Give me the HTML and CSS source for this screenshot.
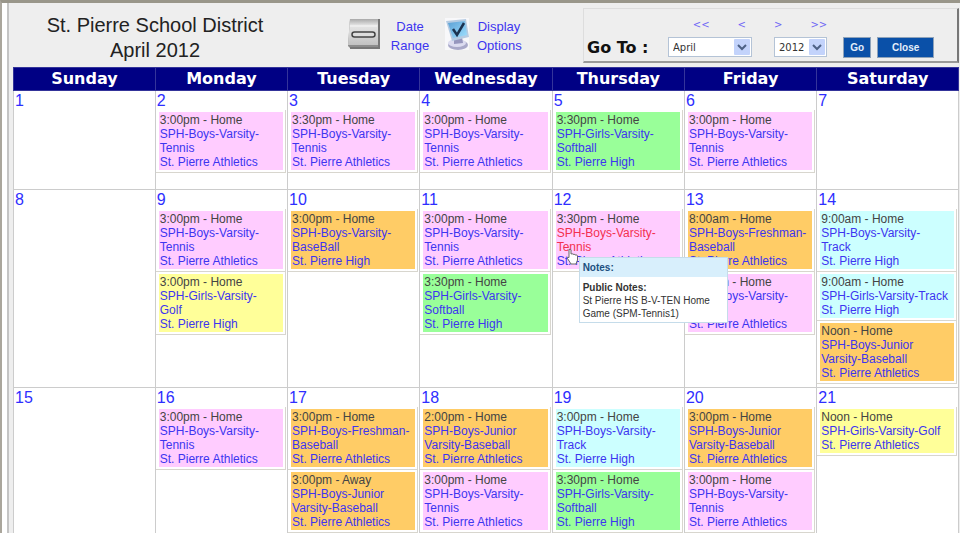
FILE: index.html
```html
<!DOCTYPE html>
<html lang="en">
<head>
    <meta charset="UTF-8">
    <meta name="viewport" content="width=device-width, initial-scale=1.0">
    <title>St. Pierre School District Calendar</title>
    <link rel="stylesheet" href="styles.css">
</head>
<body>
<div class="page">
    <header class="header">
        <h1 class="title">St. Pierre School District<br>April 2012</h1>
        <nav class="tools">
            <a href="#" class="tool">
                <svg class="icon" width="34" height="34" viewBox="0 0 34 34">
                    <defs>
                        <linearGradient id="metal" x1="0" y1="0" x2="0" y2="1">
                            <stop offset="0" stop-color="#a8a8a8"/>
                            <stop offset=".25" stop-color="#e6e6e6"/>
                            <stop offset="1" stop-color="#c2c2c2"/>
                        </linearGradient>
                    </defs>
                    <path d="M3 2h30v30H4l-3-3z" fill="#8d8d8d"/>
                    <path d="M3 2h28v26H1z" fill="url(#metal)"/>
                    <path d="M3 9h27" stroke="#f5f5f5"/>
                    <path d="M32 2v29H3" fill="none" stroke="#777" stroke-width="2"/>
                    <rect x="5" y="15" width="23" height="5" rx="2.5" fill="#ddd" stroke="#444" stroke-width="1.5"/>
                </svg>
                <span class="tool-text">Date<br>Range</span>
            </a>
            <a href="#" class="tool">
                <svg class="icon" width="26" height="34" viewBox="0 0 26 34">
                    <defs>
                        <linearGradient id="screen" x1="0" y1="0" x2="1" y2="1">
                            <stop offset="0" stop-color="#5a9fd4"/>
                            <stop offset="1" stop-color="#9fe0ff"/>
                        </linearGradient>
                    </defs>
                    <path d="M1 1h24v32H1z" fill="#f8f8fa"/>
                    <ellipse cx="14" cy="28" rx="10" ry="5" fill="#a9a9c9"/>
                    <ellipse cx="13" cy="26" rx="9" ry="4" fill="#dcdcf0"/>
                    <path d="M10 20l8 0 1 6-9 1z" fill="#9696bd"/>
                    <path d="M2 4l20-2 3 18-17 4z" fill="#b5cbe2"/>
                    <path d="M4 6l17-2 2 14-14 3z" fill="url(#screen)"/>
                    <path d="M9 12l4 6 7-12" fill="none" stroke="#1c3350" stroke-width="2.5"/>
                </svg>
                <span class="tool-text">Display<br>Options</span>
            </a>
        </nav>
        <form class="goto">
            <label class="goto-label" for="month">Go To :</label>
            <div class="picker">
                <div class="arrows arrows-back"><a href="#">&lt;&lt;</a><a href="#">&lt;</a></div>
                <div class="select-box month-box">
                    <select id="month"><option>April</option></select>
                    <svg class="drop" width="16" height="16" viewBox="0 0 16 16"><rect width="16" height="16" rx="1" fill="#c3d3fb"/><path d="M4 6l4 4 4-4" fill="none" stroke="#4d6185" stroke-width="2"/></svg>
                </div>
            </div>
            <div class="picker">
                <div class="arrows"><a href="#">&gt;</a><a href="#">&gt;&gt;</a></div>
                <div class="select-box year-box">
                    <select aria-label="Year"><option>2012</option></select>
                    <svg class="drop" width="16" height="16" viewBox="0 0 16 16"><rect width="16" height="16" rx="1" fill="#c3d3fb"/><path d="M4 6l4 4 4-4" fill="none" stroke="#4d6185" stroke-width="2"/></svg>
                </div>
            </div>
            <div class="buttons">
                <button type="button" class="btn">Go</button>
                <button type="button" class="btn btn-close">Close</button>
            </div>
        </form>
    </header>

    <table class="calendar">
        <colgroup>
            <col class="col-sun"><col class="col-day"><col class="col-day"><col class="col-day"><col class="col-day"><col class="col-day"><col class="col-sat">
        </colgroup>
        <thead>
            <tr><th>Sunday</th><th>Monday</th><th>Tuesday</th><th>Wednesday</th><th>Thursday</th><th>Friday</th><th>Saturday</th></tr>
        </thead>
        <tbody>
            <tr class="week-one">
                <td><a href="#" class="day">1</a></td>
                <td><a href="#" class="day">2</a>
                    <div class="event"><div class="box pink">3:00pm - Home<br><a href="#">SPH-Boys-Varsity-<br>Tennis<br>St. Pierre Athletics</a></div></div>
                </td>
                <td><a href="#" class="day">3</a>
                    <div class="event"><div class="box pink">3:30pm - Home<br><a href="#">SPH-Boys-Varsity-<br>Tennis<br>St. Pierre Athletics</a></div></div>
                </td>
                <td><a href="#" class="day">4</a>
                    <div class="event"><div class="box pink">3:00pm - Home<br><a href="#">SPH-Boys-Varsity-<br>Tennis<br>St. Pierre Athletics</a></div></div>
                </td>
                <td><a href="#" class="day">5</a>
                    <div class="event"><div class="box green">3:30pm - Home<br><a href="#">SPH-Girls-Varsity-<br>Softball<br>St. Pierre High</a></div></div>
                </td>
                <td><a href="#" class="day">6</a>
                    <div class="event"><div class="box pink">3:00pm - Home<br><a href="#">SPH-Boys-Varsity-<br>Tennis<br>St. Pierre Athletics</a></div></div>
                </td>
                <td><a href="#" class="day">7</a></td>
            </tr>
            <tr class="week-two">
                <td><a href="#" class="day">8</a></td>
                <td><a href="#" class="day">9</a>
                    <div class="event"><div class="box pink">3:00pm - Home<br><a href="#">SPH-Boys-Varsity-<br>Tennis<br>St. Pierre Athletics</a></div></div>
                    <div class="event"><div class="box yellow">3:00pm - Home<br><a href="#">SPH-Girls-Varsity-<br>Golf<br>St. Pierre High</a></div></div>
                </td>
                <td><a href="#" class="day">10</a>
                    <div class="event"><div class="box orange">3:00pm - Home<br><a href="#">SPH-Boys-Varsity-<br>BaseBall<br>St. Pierre High</a></div></div>
                </td>
                <td><a href="#" class="day">11</a>
                    <div class="event"><div class="box pink">3:00pm - Home<br><a href="#">SPH-Boys-Varsity-<br>Tennis<br>St. Pierre Athletics</a></div></div>
                    <div class="event"><div class="box green">3:30pm - Home<br><a href="#">SPH-Girls-Varsity-<br>Softball<br>St. Pierre High</a></div></div>
                </td>
                <td><a href="#" class="day">12</a>
                    <div class="event"><div class="box pink">3:30pm - Home<br><a href="#" class="active">SPH-Boys-Varsity-<br>Tennis</a><br><a href="#">St. Pierre Athletics</a></div>
                        <div class="notes">
                            <div class="notes-title">Notes:</div>
                            <div class="notes-body"><b>Public Notes:</b><br>St Pierre HS B-V-TEN Home<br>Game (SPM-Tennis1)</div>
                        </div>
                        <svg class="pointer" width="14" height="17" viewBox="0 0 14 17"><path d="M3 1.5q1.5-1 2 .5V6q1.500-.8 2 .4 1.500-.8 2 .6 2-.8 2.500 1v4l-1.500 4H5L1.500 10.500q-.6-2 1.500-1z" fill="#fff" stroke="#666" stroke-width="1"/></svg>
                    </div>
                </td>
                <td><a href="#" class="day">13</a>
                    <div class="event"><div class="box orange">8:00am - Home<br><a href="#">SPH-Boys-Freshman-<br>Baseball<br>St. Pierre Athletics</a></div></div>
                    <div class="event"><div class="box pink">3:00pm - Home<br><a href="#">SPH-Boys-Varsity-<br>Tennis<br>St. Pierre Athletics</a></div></div>
                </td>
                <td><a href="#" class="day">14</a>
                    <div class="event"><div class="box cyan">9:00am - Home<br><a href="#">SPH-Boys-Varsity-<br>Track<br>St. Pierre High</a></div></div>
                    <div class="event"><div class="box cyan">9:00am - Home<br><a href="#">SPH-Girls-Varsity-Track<br>St. Pierre High</a></div></div>
                    <div class="event"><div class="box orange">Noon - Home<br><a href="#">SPH-Boys-Junior<br>Varsity-Baseball<br>St. Pierre Athletics</a></div></div>
                </td>
            </tr>
            <tr>
                <td><a href="#" class="day">15</a></td>
                <td><a href="#" class="day">16</a>
                    <div class="event"><div class="box pink">3:00pm - Home<br><a href="#">SPH-Boys-Varsity-<br>Tennis<br>St. Pierre Athletics</a></div></div>
                </td>
                <td><a href="#" class="day">17</a>
                    <div class="event"><div class="box orange">3:00pm - Home<br><a href="#">SPH-Boys-Freshman-<br>Baseball<br>St. Pierre Athletics</a></div></div>
                    <div class="event"><div class="box orange">3:00pm - Away<br><a href="#">SPH-Boys-Junior<br>Varsity-Baseball<br>St. Pierre Athletics</a></div></div>
                </td>
                <td><a href="#" class="day">18</a>
                    <div class="event"><div class="box orange">2:00pm - Home<br><a href="#">SPH-Boys-Junior<br>Varsity-Baseball<br>St. Pierre Athletics</a></div></div>
                    <div class="event"><div class="box pink">3:00pm - Home<br><a href="#">SPH-Boys-Varsity-<br>Tennis<br>St. Pierre Athletics</a></div></div>
                </td>
                <td><a href="#" class="day">19</a>
                    <div class="event"><div class="box cyan">3:00pm - Home<br><a href="#">SPH-Boys-Varsity-<br>Track<br>St. Pierre High</a></div></div>
                    <div class="event"><div class="box green">3:30pm - Home<br><a href="#">SPH-Girls-Varsity-<br>Softball<br>St. Pierre High</a></div></div>
                </td>
                <td><a href="#" class="day">20</a>
                    <div class="event"><div class="box orange">3:00pm - Home<br><a href="#">SPH-Boys-Junior<br>Varsity-Baseball<br>St. Pierre Athletics</a></div></div>
                    <div class="event"><div class="box pink">3:00pm - Home<br><a href="#">SPH-Boys-Varsity-<br>Tennis<br>St. Pierre Athletics</a></div></div>
                </td>
                <td><a href="#" class="day">21</a>
                    <div class="event"><div class="box yellow">Noon - Home<br><a href="#">SPH-Girls-Varsity-Golf<br>St. Pierre Athletics</a></div></div>
                </td>
            </tr>
        </tbody>
    </table>
</div>
</body>
</html>
```
FILE: styles.css
```css
* {
    box-sizing: border-box;
}
body {
    margin: 0;
    height: 100vh;
    overflow: hidden;
    font-family: "Liberation Sans", Arial, sans-serif;
    background-color: #fff;
    border-top: 3px solid #99968a;
    border-left: 2px solid #aaa69c;
}
a {
    color: #3d35f0;
    text-decoration: none;
}
.page {
    margin-left: 5px;
    min-height: 100vh;
    padding: 1px 1px 0 4px;
    border-left: 2px solid #c4c4c4;
    background-color: #eee;
}

/* Top bar */
.header {
    display: flex;
    height: 63px;
    padding-top: 4px;
}
.title {
    width: 284px;
    margin: 0;
    padding-top: 5px;
    font-size: 20px;
    line-height: 25px;
    font-weight: normal;
    text-align: center;
    color: #222;
}
.tools {
    display: flex;
    flex: 1;
    gap: 12px;
    padding: 9px 0 0 50px;
}
.tool {
    display: flex;
    gap: 7px;
}
.tool-text {
    width: 44px;
    font-size: 13px;
    line-height: 19px;
    text-align: center;
}
.goto {
    display: flex;
    width: 376px;
    height: 55px;
    padding-left: 3px;
    border: 1px solid #ddd;
    border-right: 2px solid #777;
    border-bottom: 2px solid #999;
}
.goto-label {
    width: 81px;
    padding-top: 29px;
    font: bold 16px/20px "DejaVu Sans", Verdana, sans-serif;
    color: #111;
}
.picker {
    margin-right: 22px;
}
.arrows {
    display: flex;
    gap: 28px;
    height: 28px;
    padding-top: 9px;
    font: 10px/14px "DejaVu Sans", Verdana, sans-serif;
}
.arrows-back {
    justify-content: flex-end;
    padding-right: 6px;
}
.arrows a {
    color: #7068f5;
}
.select-box {
    display: flex;
    align-items: center;
    height: 20px;
    padding-right: 1px;
    border: 1px solid #b4c3d6;
    background-color: #fff;
}
.month-box {
    width: 84px;
}
.year-box {
    width: 53px;
}
.select-box select {
    flex: 1;
    min-width: 0;
    padding: 0 0 0 4px;
    border: 0;
    appearance: none;
    background: none;
    font: 10px "DejaVu Sans", Verdana, sans-serif;
    color: #333;
}
.buttons {
    display: flex;
    gap: 6px;
    padding-top: 28px;
    margin-left: -6px;
}
.btn {
    width: 28px;
    height: 21px;
    padding: 0;
    border: 1px solid #8fa3ba;
    background-color: #0a50a8;
    color: #e4eefa;
    font: bold 10px "Liberation Sans", Arial, sans-serif;
}
.btn-close {
    width: 57px;
}

/* Month grid */
.calendar {
    width: 100%;
    table-layout: fixed;
    border-collapse: collapse;
    background-color: #fff;
}
.col-sun {
    width: 15%;
}
.col-day {
    width: 14%;
}
.col-sat {
    width: 15%;
}
.calendar th {
    height: 23px;
    padding: 0;
    border: 1px solid #34349a;
    background-color: #000084;
    color: #fff;
    font: bold 16px/22px "DejaVu Sans", Verdana, sans-serif;
}
.calendar td {
    padding: 0;
    border: 1px solid #ccc;
    vertical-align: top;
}
.week-one td {
    height: 99px;
}
.week-two td {
    height: 198px;
}
.day {
    display: block;
    height: 19px;
    padding-left: 1px;
    font-size: 16px;
    line-height: 20px;
    color: #2e2eff;
}
.event {
    position: relative;
    margin-right: 1px;
    padding: 2px 2px 2px 3px;
    border-right: 1px solid #d8d6ce;
    border-bottom: 1px solid #d8d6ce;
}
.box {
    padding: 1px 0 1px 1px;
    font-size: 12px;
    line-height: 14px;
    white-space: nowrap;
    color: #444;
}
.pink {
    background-color: #fcf;
}
.green {
    background-color: #9f9;
}
.yellow {
    background-color: #ff9;
}
.orange {
    background-color: #fc6;
}
.cyan {
    background-color: #cff;
}
.box .active {
    color: #f33050;
}

/* Hover notes */
.notes {
    position: absolute;
    z-index: 1;
    top: 48px;
    left: 26px;
    width: 149px;
    border: 1px solid #c5dcea;
    background-color: #fff;
    font-size: 10px;
    line-height: 13px;
    color: #333;
}
.notes-title {
    padding: 3px;
    background-color: #d8effc;
    font-weight: bold;
    color: #1d5080;
}
.notes-body {
    padding: 4px 3px 2px;
}
.pointer {
    position: absolute;
    z-index: 2;
    top: 39px;
    left: 13px;
}
```
